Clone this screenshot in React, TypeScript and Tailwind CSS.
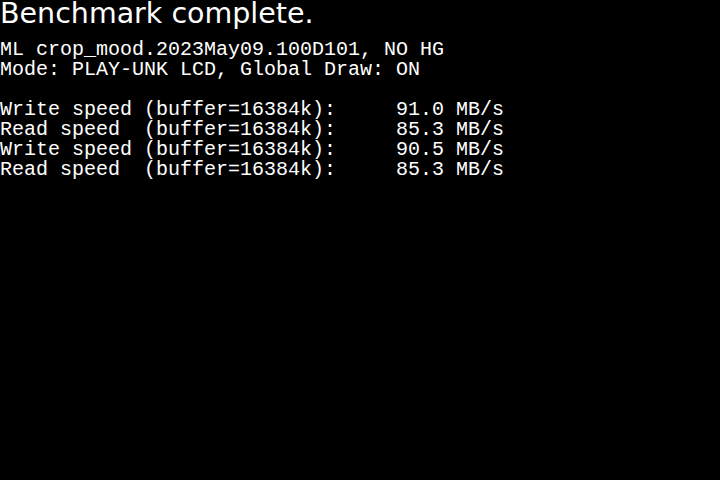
export default function App() {
  const lines = [
    "ML crop_mood.2023May09.100D101, NO HG",
    "Mode: PLAY-UNK LCD, Global Draw: ON",
    "",
    "Write speed (buffer=16384k):     91.0 MB/s",
    "Read speed  (buffer=16384k):     85.3 MB/s",
    "Write speed (buffer=16384k):     90.5 MB/s",
    "Read speed  (buffer=16384k):     85.3 MB/s",
  ];

  return (
    <div className="w-[720px] h-[480px] bg-black text-white overflow-hidden">
      <h1 className="text-[28.5px] leading-[28px] font-normal font-['DejaVu_Sans',sans-serif]">
        Benchmark complete.
      </h1>
      <div className="mt-3 font-['Liberation_Mono',monospace] text-[20px] leading-[20px] whitespace-pre">
        {lines.map((line, i) => (
          <div key={i} className="h-5">
            {line}
          </div>
        ))}
      </div>
    </div>
  );
}
